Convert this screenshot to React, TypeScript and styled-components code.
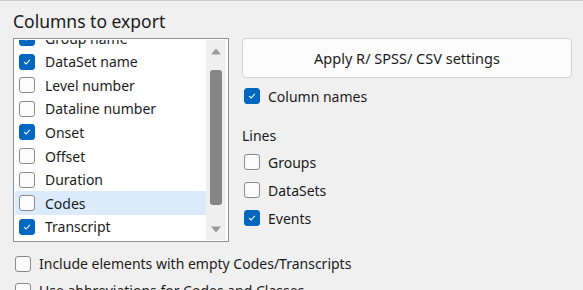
import React from "react";
import styled, { createGlobalStyle } from "styled-components";

const GlobalStyle = createGlobalStyle`
  html, body {
    margin: 0;
    padding: 0;
    background: #f0f0f0;
  }
  body {
    font-family: "Noto Sans", "Open Sans", sans-serif;
    color: #1b1b1b;
  }
`;

const columns = [
  { label: "Group name", checked: true },
  { label: "DataSet name", checked: true },
  { label: "Level number", checked: false },
  { label: "Dataline number", checked: false },
  { label: "Onset", checked: true },
  { label: "Offset", checked: false },
  { label: "Duration", checked: false },
  { label: "Codes", checked: false },
  { label: "Transcript", checked: true },
];

const lines = [
  { label: "Groups", checked: false },
  { label: "DataSets", checked: false },
  { label: "Events", checked: true },
];

const Check = ({ checked }: { checked: boolean }) => (
  <CheckBoxStyled $checked={checked}>
    {checked ? (
      <svg width="10" height="10" viewBox="0 0 10 10">
        <path
          d="M2.4 5.3 L4.2 7 L7.6 3.2"
          fill="none"
          stroke="#ffffff"
          strokeWidth="1.1"
          strokeLinecap="round"
          strokeLinejoin="round"
        />
      </svg>
    ) : null}
  </CheckBoxStyled>
);

const App = () => {
  return (
    <PageStyled>
      <GlobalStyle />
      <TitleStyled>Columns to export</TitleStyled>
      <TopRowStyled>
        <ListBoxStyled>
          <ListViewportStyled>
            <ListInnerStyled>
              {columns.map((c) => (
                <ListRowStyled key={c.label} $selected={c.label === "Codes"}>
                  <Check checked={c.checked} />
                  <span>{c.label}</span>
                </ListRowStyled>
              ))}
            </ListInnerStyled>
          </ListViewportStyled>
          <ScrollTrackStyled>
            <ArrowStyled>
              <svg width="10" height="7" viewBox="0 0 10 7">
                <path d="M0 6.5 L5 0.5 L10 6.5 Z" fill="#9a9a9a" />
              </svg>
            </ArrowStyled>
            <ThumbStyled />
            <ArrowStyled>
              <svg width="10" height="7" viewBox="0 0 10 7">
                <path d="M0 0.5 L5 6.5 L10 0.5 Z" fill="#9a9a9a" />
              </svg>
            </ArrowStyled>
          </ScrollTrackStyled>
        </ListBoxStyled>

        <SideStyled>
          <ButtonStyled>Apply R/ SPSS/ CSV settings</ButtonStyled>
          <OptionRowStyled className="colnames">
            <Check checked={true} />
            <span>Column names</span>
          </OptionRowStyled>
          <LabelStyled>Lines</LabelStyled>
          <LinesStyled>
            {lines.map((l) => (
              <OptionRowStyled key={l.label}>
                <Check checked={l.checked} />
                <span>{l.label}</span>
              </OptionRowStyled>
            ))}
          </LinesStyled>
        </SideStyled>
      </TopRowStyled>

      <BottomStyled>
        <OptionRowStyled>
          <Check checked={false} />
          <span>Include elements with empty Codes/Transcripts</span>
        </OptionRowStyled>
        <OptionRowStyled>
          <Check checked={false} />
          <span>Use abbreviations for Codes and Classes</span>
        </OptionRowStyled>
      </BottomStyled>
    </PageStyled>
  );
};

export default App;

const PageStyled = styled.div`
  width: 583px;
  height: 290px;
  overflow: hidden;
  box-sizing: border-box;
  border-top: 1px solid #c9c9c9;
  padding: 0 0 0 13px;
`;

const TitleStyled = styled.div`
  font-size: 17.5px;
  line-height: 24px;
  margin-top: 8px;
  height: 29px;
`;

const TopRowStyled = styled.div`
  display: flex;
  align-items: flex-start;
  gap: 13px;
`;

const ListBoxStyled = styled.div`
  display: flex;
  width: 216px;
  height: 204px;
  box-sizing: border-box;
  border: 1px solid #8d9198;
  background: #ffffff;
  padding: 1px 2px 1px 1px;
`;

const ListViewportStyled = styled.div`
  flex: 1;
  overflow: hidden;
`;

const ListInnerStyled = styled.div`
  margin-top: -13.7px;
`;

const ListRowStyled = styled.div<{ $selected: boolean }>`
  display: flex;
  align-items: center;
  gap: 10px;
  height: 23.6px;
  padding-left: 4px;
  font-size: 14px;
  background: ${(p) => (p.$selected ? "#dcebfc" : "transparent")};
`;

const CheckBoxStyled = styled.div<{ $checked: boolean }>`
  flex: none;
  width: 16px;
  height: 16px;
  box-sizing: border-box;
  border-radius: 3px;
  display: flex;
  align-items: center;
  justify-content: center;
  background: ${(p) => (p.$checked ? "#0067c0" : "#fbfbfb")};
  border: 1px solid ${(p) => (p.$checked ? "#0067c0" : "#8b8b8b")};
`;

const ScrollTrackStyled = styled.div`
  width: 20px;
  flex: none;
  background: #efefef;
  display: flex;
  flex-direction: column;
  align-items: center;
`;

const ArrowStyled = styled.div`
  height: 22px;
  display: flex;
  align-items: center;
  justify-content: center;
`;

const ThumbStyled = styled.div`
  width: 12px;
  height: 135px;
  margin-top: 8px;
  margin-bottom: auto;
  background: #858585;
  border-radius: 3px;
`;

const SideStyled = styled.div`
  display: flex;
  flex-direction: column;
  width: 330px;
`;

const ButtonStyled = styled.button`
  height: 40px;
  width: 330px;
  box-sizing: border-box;
  border: 1px solid #d2d2d2;
  border-radius: 4px;
  background: #fbfbfb;
  font-family: "Noto Sans", "Open Sans", sans-serif;
  font-size: 14.5px;
  color: #1b1b1b;
  padding: 0;
`;

const OptionRowStyled = styled.div`
  display: flex;
  align-items: center;
  gap: 8px;
  height: 28px;
  font-size: 14px;
  padding-left: 2px;
  &.colnames {
    margin-top: 4px;
  }
`;

const LabelStyled = styled.div`
  font-size: 14px;
  margin-top: 15px;
  height: 22px;
  line-height: 22px;
`;

const LinesStyled = styled.div`
  display: flex;
  flex-direction: column;
  margin-top: 1px;
`;

const BottomStyled = styled.div`
  display: flex;
  flex-direction: column;
  margin-top: 8px;
  & > div {
    padding-left: 2px;
    gap: 8px;
    height: 27px;
  }
`;
